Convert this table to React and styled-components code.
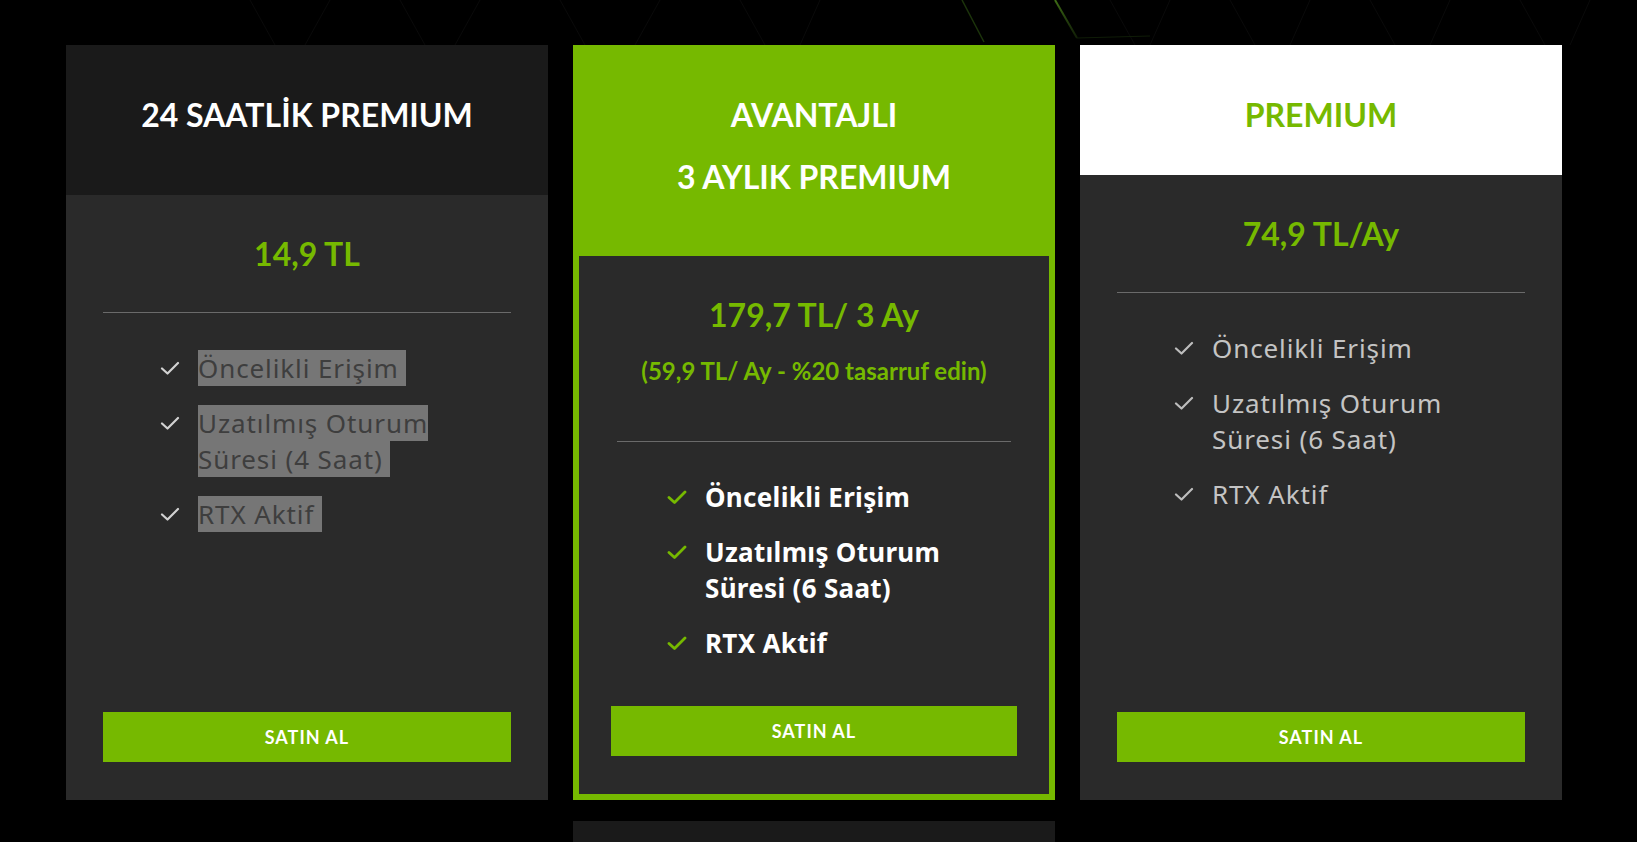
import React from 'react'
import styled, { createGlobalStyle } from 'styled-components'

const GREEN = '#76b900'

const GlobalStyle = createGlobalStyle`
  html, body {
    margin: 0;
    padding: 0;
    background: #000;
    overflow: hidden;
  }
  * { box-sizing: border-box; }
`

const Page = styled.div`
  position: relative;
  min-height: 100vh;
  padding: 45px 0 0 66px;
  background: #000;
  font-family: 'Lato', 'Liberation Sans', sans-serif;
`

const Backdrop = styled.svg`
  position: absolute;
  top: 0;
  left: 0;
  width: 100%;
  height: 45px;
  pointer-events: none;
`

const Plans = styled.div`
  position: relative;
  z-index: 1;
  display: grid;
  grid-template-columns: repeat(3, 482px);
  column-gap: 25px;
  row-gap: 21px;
`

const Card = styled.div`
  display: flex;
  flex-direction: column;
  height: 755px;
  background: ${p => (p.$featured ? GREEN : '#2a2a2a')};
  padding: ${p => (p.$featured ? '0 6px 6px' : '0')};
`

const Header = styled.div`
  height: ${p => p.$height}px;
  padding-top: 39px;
  background: ${p => p.$bg};
  text-align: center;
  flex-shrink: 0;
`

const Title = styled.div`
  font-family: 'Lato', 'Liberation Sans', sans-serif;
  font-weight: 700;
  font-size: 32px;
  line-height: 62px;
  color: ${p => p.$color};
`

const Body = styled.div`
  flex: 1;
  display: flex;
  flex-direction: column;
  background: #2a2a2a;
  padding: 40px ${p => (p.$featured ? 32 : 37)}px 38px;
`

const Price = styled.div`
  font-weight: 700;
  font-size: 32px;
  line-height: 1.2;
  color: ${GREEN};
  text-align: center;
`

const Saving = styled.div`
  margin: 23px 0 16px;
  font-weight: 700;
  font-size: 24px;
  line-height: 1.2;
  color: ${GREEN};
  text-align: center;
`

const Divider = styled.div`
  height: 1px;
  margin: 39px ${p => (p.$featured ? 6 : 0)}px 0;
  background: #6a6a6a;
`

const Features = styled.ul`
  list-style: none;
  margin: 37px 0 0;
  padding: 0 ${p => (p.$featured ? 56 : 57)}px;
  display: flex;
  flex-direction: column;
  gap: 19px;
`

const Feature = styled.li`
  display: flex;
  align-items: flex-start;
  gap: 18px;
  font-family: 'Noto Sans', 'DejaVu Sans', sans-serif;
  font-size: 26px;
  line-height: 36px;
  font-weight: ${p => (p.$tone === 'bold' ? 700 : 400)};
  letter-spacing: ${p => (p.$tone === 'bold' ? 0.3 : 0.9)}px;
  color: ${p => (p.$tone === 'bold' ? '#fff' : p.$tone === 'muted' ? '#3e3e3e' : '#c4c4c4')};

  svg {
    flex-shrink: 0;
    margin-top: 11px;
  }
`

const Selected = styled.span`
  background: #767676;
`

const BuyButton = styled.button`
  margin-top: auto;
  height: 50px;
  width: 100%;
  border: 0;
  background: ${GREEN};
  color: #fff;
  font-family: 'Lato', 'Liberation Sans', sans-serif;
  font-weight: 700;
  font-size: 18px;
  letter-spacing: 1px;
  cursor: pointer;
`

const Below = styled.div`
  grid-column: 2;
  height: 60px;
  background: #1a1a1a;
`

function Check({ color, bold }) {
  return (
    <svg width="20" height="14" viewBox="0 0 20 14">
      <path
        d="M2 7.5 L7.5 12.5 L18 2"
        fill="none"
        stroke={color}
        strokeWidth={bold ? 2.8 : 2.2}
        strokeLinecap="round"
        strokeLinejoin="round"
      />
    </svg>
  )
}

const plans = [
  {
    title: ['24 SAATLİK PREMIUM'],
    headerHeight: 150,
    headerBg: '#1a1a1a',
    titleColor: '#fff',
    price: '14,9 TL',
    tone: 'muted',
    checkColor: '#d2d2d2',
    features: ['Öncelikli Erişim', 'Uzatılmış Oturum Süresi (4 Saat)', 'RTX Aktif'],
  },
  {
    featured: true,
    title: ['AVANTAJLI', '3 AYLIK PREMIUM'],
    headerHeight: 211,
    headerBg: 'transparent',
    titleColor: '#fff',
    price: '179,7 TL/ 3 Ay',
    saving: '(59,9 TL/ Ay - %20 tasarruf edin)',
    tone: 'bold',
    checkColor: GREEN,
    features: ['Öncelikli Erişim', 'Uzatılmış Oturum Süresi (6 Saat)', 'RTX Aktif'],
  },
  {
    title: ['PREMIUM'],
    headerHeight: 130,
    headerBg: '#fff',
    titleColor: GREEN,
    price: '74,9 TL/Ay',
    tone: 'plain',
    checkColor: '#bdbdbd',
    features: ['Öncelikli Erişim', 'Uzatılmış Oturum Süresi (6 Saat)', 'RTX Aktif'],
  },
]

function PlanCard({ plan }) {
  return (
    <Card $featured={plan.featured}>
      <Header $height={plan.headerHeight} $bg={plan.headerBg}>
        {plan.title.map(t => (
          <Title key={t} $color={plan.titleColor}>{t}</Title>
        ))}
      </Header>
      <Body $featured={plan.featured}>
        <Price>{plan.price}</Price>
        {plan.saving && <Saving>{plan.saving}</Saving>}
        <Divider $featured={plan.featured} />
        <Features $featured={plan.featured}>
          {plan.features.map(f => (
            <Feature key={f} $tone={plan.tone}>
              <Check color={plan.checkColor} bold={plan.featured} />
              <span>{plan.tone === 'muted' ? <Selected>{f}&nbsp;</Selected> : f}</span>
            </Feature>
          ))}
        </Features>
        <BuyButton>SATIN AL</BuyButton>
      </Body>
    </Card>
  )
}

export default function App() {
  return (
    <>
      <GlobalStyle />
      <Page>
        <Backdrop viewBox="0 0 1637 45" preserveAspectRatio="none">
          <defs>
            <linearGradient id="glow" x1="0" y1="0" x2="0" y2="1">
              <stop offset="0" stopColor="#4f8a1c" stopOpacity="0.8" />
              <stop offset="1" stopColor="#2c4d10" stopOpacity="0.4" />
            </linearGradient>
          </defs>
          <g stroke="#0a0a0a" strokeWidth="1" fill="none">
            <path d="M250 0 L275 45 M330 0 L305 45 M400 0 L425 45 M480 0 L455 45 M560 0 L585 45 M660 0 L635 45 M740 0 L765 45 M820 0 L800 45" />
            <path d="M1110 0 L1135 45 M1170 0 L1150 45 M1230 0 L1255 45 M1310 0 L1290 45 M1370 0 L1395 45 M1450 0 L1430 45 M1520 0 L1545 45 M1590 0 L1570 45" />
          </g>
          <path d="M962 0 L984 42" stroke="#1c340b" strokeWidth="1.5" fill="none" />
          <path d="M1055 0 L1077 38" stroke="url(#glow)" strokeWidth="2" fill="none" />
          <path d="M1077 38 L1150 36" stroke="#0f1c07" strokeWidth="1" fill="none" />
        </Backdrop>
        <Plans>
          {plans.map((p, i) => (
            <PlanCard key={i} plan={p} />
          ))}
          <Below />
        </Plans>
      </Page>
    </>
  )
}
